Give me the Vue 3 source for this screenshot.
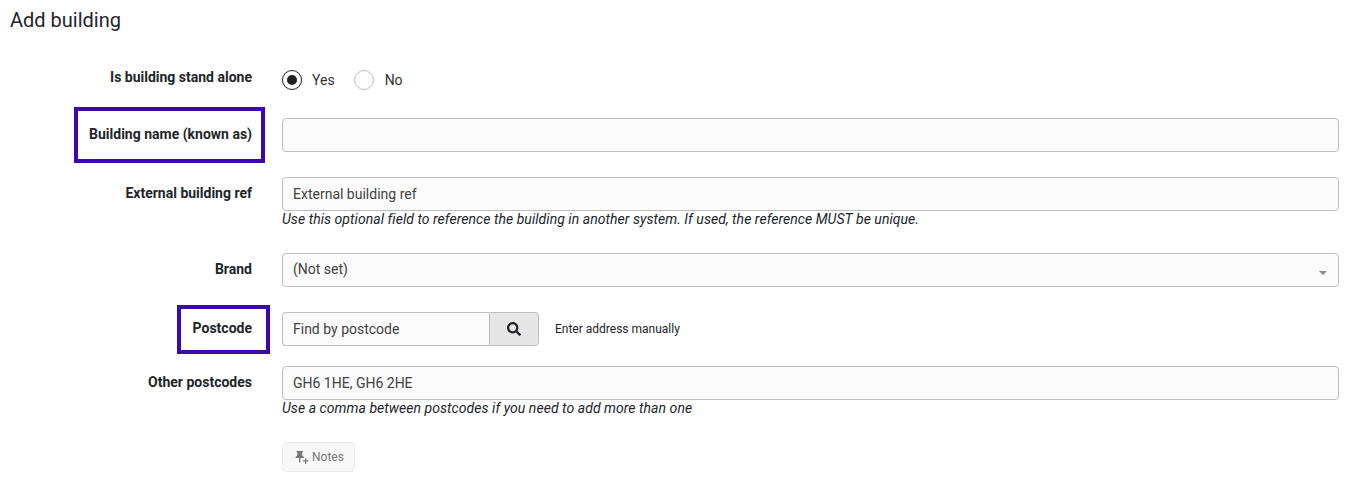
<script setup>
</script>

<template>
  <div class="page">
    <h1 class="title">Add building</h1>
    <form class="form" @submit.prevent>
      <div class="row">
        <label class="label">Is building stand alone</label>
        <div class="radios">
          <span class="radio checked"><i></i></span><span class="radio-text">Yes</span>
          <span class="radio"></span><span class="radio-text radio-text-no">No</span>
        </div>
      </div>

      <div class="row">
        <label class="label"><span class="mark mark-name"></span>Building name (known as)</label>
        <div class="field"><input class="input" type="text" /></div>
      </div>

      <div class="row">
        <label class="label">External building ref</label>
        <div class="field">
          <input class="input" type="text" placeholder="External building ref" />
          <p class="help">Use this optional field to reference the building in another system. If used, the reference MUST be unique.</p>
        </div>
      </div>

      <div class="row">
        <label class="label">Brand</label>
        <div class="field">
          <div class="select">(Not set)<span class="caret"></span></div>
        </div>
      </div>

      <div class="row row-tight">
        <label class="label"><span class="mark mark-post"></span>Postcode</label>
        <div class="lookup">
          <div class="group">
            <input class="input group-input" type="text" placeholder="Find by postcode" />
            <button class="search" type="button" aria-label="Search">
              <svg viewBox="0 0 512 512" width="14" height="14"><path fill="#212529" d="M505 442.700L405.300 343c-4.500-4.500-10.600-7-17-7H372c27.600-35.300 44-79.700 44-128C416 93.100 322.900 0 208 0S0 93.100 0 208s93.100 208 208 208c48.300 0 92.700-16.400 128-44v16.300c0 6.400 2.500 12.500 7 17l99.700 99.700c9.400 9.400 24.600 9.400 33.900 0l28.300-28.300c9.400-9.400 9.400-24.600.1-34zM208 336c-70.700 0-128-57.200-128-128 0-70.700 57.200-128 128-128 70.700 0 128 57.200 128 128 0 70.700-57.200 128-128 128z"/></svg>
            </button>
          </div>
          <span class="manual">Enter address manually</span>
        </div>
      </div>

      <div class="row">
        <label class="label">Other postcodes</label>
        <div class="field">
          <input class="input" type="text" value="GH6 1HE, GH6 2HE" />
          <p class="help">Use a comma between postcodes if you need to add more than one</p>
        </div>
      </div>

      <div class="row">
        <span></span>
        <div>
          <button class="notes" type="button">
            <svg viewBox="0 0 14 14" width="14" height="14"><path fill="#777" d="M1.500 1h6.500v1.300h-1l.4 3.400c1 .5 1.500 1.300 1.500 2.300H5.400v4L4.700 13 4 11.700V8H.6c0-1 .5-1.800 1.500-2.300l.4-3.400h-1z"/><path fill="#777" d="M10 8.200h1.300v2.100h2.100v1.300h-2.100v2.100H10v-2.100H7.900v-1.300H10z"/></svg>
            Notes
          </button>
        </div>
      </div>
    </form>
  </div>
</template>

<style>
html, body { margin: 0; background: #fff; }
</style>

<style scoped>
.page {
  box-sizing: border-box;
  height: 478px;
  overflow: hidden;
  font-family: Roboto, "Liberation Sans", sans-serif;
  font-size: 14px;
  color: #212529;
}
.title {
  margin: 8px 0 29px 10px;
  font-size: 20px;
  line-height: 24px;
  font-weight: 400;
}
.form { padding-right: 22px; }
.row {
  display: grid;
  grid-template-columns: 252px 1fr;
  column-gap: 30px;
  margin-bottom: 25px;
}
.row-tight { margin-bottom: 20px; }
.label {
  position: relative;
  display: block;
  text-align: right;
  font-weight: 700;
  font-size: 14px;
  line-height: 20px;
  padding-top: 6px;
}
.mark {
  position: absolute;
  box-sizing: border-box;
  border: 4px solid #3c07ae;
}
.mark-name { left: 74px; top: -11px; width: 191px; height: 56px; }
.mark-post { left: 177px; top: -7px; width: 93px; height: 49px; }
.radios {
  display: flex;
  align-items: center;
  height: 20px;
  padding: 9px 0 3px;
}
.radio {
  box-sizing: border-box;
  display: flex;
  align-items: center;
  justify-content: center;
  width: 20px;
  height: 20px;
  border: 1px solid #bdbdbd;
  border-radius: 50%;
  background: #fff;
}
.radio.checked { border-color: #212121; }
.radio i { width: 10px; height: 10px; border-radius: 50%; background: #212121; }
.radio-text { margin: 0 19px 0 10px; color: #333; line-height: 20px; }
.radio-text-no { margin-left: 11px; }
.input {
  box-sizing: border-box;
  display: block;
  width: 100%;
  height: 34px;
  padding: 0 10px;
  border: 1px solid #bdbdbd;
  border-radius: 4px;
  background: #fbfbfb;
  font: 400 14px Roboto, "Liberation Sans", sans-serif;
  color: #424242;
  outline: none;
}
.input::placeholder { color: #424242; opacity: 1; }
.help {
  margin: 0;
  font-size: 14px;
  font-style: italic;
  line-height: 17px;
  letter-spacing: 0.05px;
  color: #212529;
}
.select {
  position: relative;
  box-sizing: border-box;
  height: 34px;
  padding: 0 10px;
  line-height: 30px;
  border: 1px solid #bdbdbd;
  border-radius: 4px;
  background: #fbfbfb;
  color: #424242;
}
.caret {
  position: absolute;
  right: 11px;
  top: 17px;
  border-left: 4px solid transparent;
  border-right: 4px solid transparent;
  border-top: 4px solid #888;
}
.lookup { display: flex; align-items: center; }
.group { display: flex; width: 257px; }
.group-input {
  flex: 1;
  min-width: 0;
  border-right: 0;
  border-radius: 4px 0 0 4px;
}
.search {
  box-sizing: border-box;
  width: 50px;
  height: 34px;
  display: flex;
  align-items: center;
  justify-content: center;
  padding: 0;
  border: 1px solid #bdbdbd;
  border-radius: 0 4px 4px 0;
  background: #e6e6e6;
}
.manual { margin-left: 16px; font-size: 12px; color: #212529; }
.notes {
  box-sizing: border-box;
  display: flex;
  align-items: center;
  gap: 3px;
  height: 30px;
  padding: 0 10px 0 12px;
  border: 1px solid #ececec;
  border-radius: 4px;
  background: #f8f8f8;
  font: 400 12px Roboto, "Liberation Sans", sans-serif;
  color: #757575;
}
</style>
